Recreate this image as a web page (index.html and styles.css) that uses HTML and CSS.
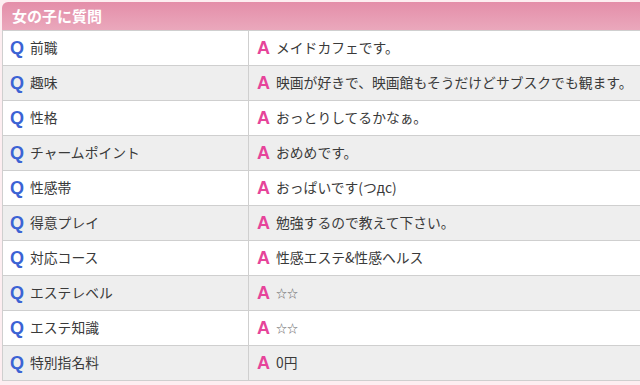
FILE: index.html
```html
<!DOCTYPE html>
<html lang="ja">
<head>
<meta charset="utf-8">
<link rel="stylesheet" href="styles.css">
</head>
<body>
<div class="box">
  <h2 class="ttl">女の子に質問</h2>
  <table class="qa">
    <tr class="odd"><th><span class="q">Q</span>前職</th><td><span class="a">A</span>メイドカフェです。</td></tr>
    <tr class="even"><th><span class="q">Q</span>趣味</th><td><span class="a">A</span>映画が好きで、映画館もそうだけどサブスクでも観ます。</td></tr>
    <tr class="odd"><th><span class="q">Q</span>性格</th><td><span class="a">A</span>おっとりしてるかなぁ。</td></tr>
    <tr class="even"><th><span class="q">Q</span>チャームポイント</th><td><span class="a">A</span>おめめです。</td></tr>
    <tr class="odd"><th><span class="q">Q</span>性感帯</th><td><span class="a">A</span>おっぱいです(つдc)</td></tr>
    <tr class="even"><th><span class="q">Q</span>得意プレイ</th><td><span class="a">A</span>勉強するので教えて下さい。</td></tr>
    <tr class="odd"><th><span class="q">Q</span>対応コース</th><td><span class="a">A</span>性感エステ&amp;性感ヘルス</td></tr>
    <tr class="even"><th><span class="q">Q</span>エステレベル</th><td><span class="a">A</span><span class="star">☆☆</span></td></tr>
    <tr class="odd"><th><span class="q">Q</span>エステ知識</th><td><span class="a">A</span><span class="star">☆☆</span></td></tr>
    <tr class="even"><th><span class="q">Q</span>特別指名料</th><td><span class="a">A</span>0円</td></tr>
  </table>
</div>
</body>
</html>
```
FILE: styles.css
```css
html, body {
  margin: 0;
  padding: 0;
  background: #fdeef1;
}
body {
  font-family: "Noto Sans CJK JP", "Liberation Sans", sans-serif;
  color: #3a3a3a;
  overflow: hidden;
}
.box {
  margin: 2px 0 0 2px;
  width: 660px;
}
.ttl {
  margin: 0;
  height: 28px;
  line-height: 27px;
  padding-left: 10px;
  font-size: 15px;
  font-weight: bold;
  color: #fff;
  background: linear-gradient(#e48ea9, #eaa8bc);
  border-radius: 6px 6px 0 0;
}
.qa {
  width: 100%;
  border-collapse: collapse;
  background: #fff;
}
.qa th, .qa td {
  height: 34px;
  padding: 0 0 0 8px;
  border: 1px solid #cfcfcf;
  font-size: 13.8px;
  font-weight: normal;
  text-align: left;
  vertical-align: middle;
  white-space: nowrap;
}
.qa th {
  width: 238px;
  padding-left: 7px;
}
.qa tr.even th, .qa tr.even td {
  background: #eeeeee;
}
.q, .a {
  font-family: "Liberation Sans", sans-serif;
  font-weight: bold;
  font-size: 18px;
  margin-right: 6px;
  vertical-align: -1px;
}
.q { color: #3b63d4; }
.a { color: #e6449a; }
.star {
  font-size: 11px;
  color: #666;
}
```
